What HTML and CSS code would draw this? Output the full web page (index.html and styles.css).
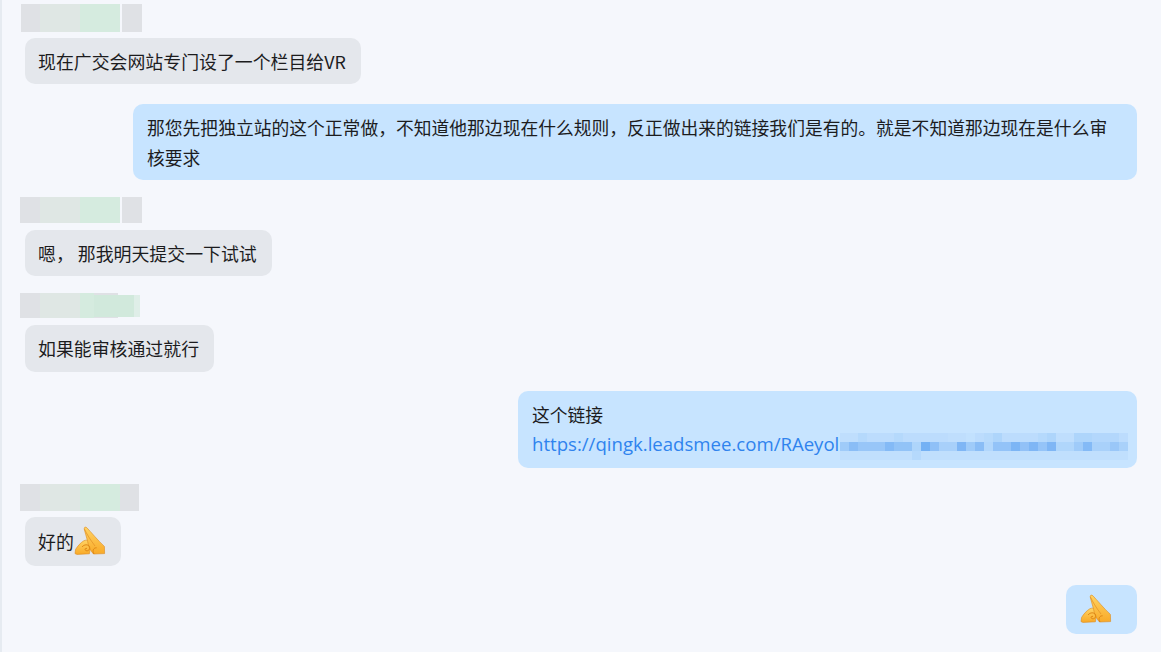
FILE: index.html
```html
<!DOCTYPE html>
<html lang="zh-CN">
<head>
<meta charset="utf-8">
<title>聊天记录</title>
<link rel="stylesheet" href="styles.css">
</head>
<body>
<svg class="defs" width="0" height="0" aria-hidden="true">
  <defs>
    <linearGradient id="gold" x1="0" y1="0" x2="0" y2="1">
      <stop offset="0" stop-color="#ffd363"/>
      <stop offset="1" stop-color="#f9aa28"/>
    </linearGradient>
    <symbol id="hands" viewBox="0 0 32 30">
      <path d="M1 27.6 L1.6 23.4 C3.5 20.2 6.5 16.8 9.8 14.8 C11.6 13.8 13.6 14 15 15.2 L17 19 L15.4 27.8 L3 28.4 Z" fill="url(#gold)" stroke="#dc8a1c" stroke-width=".6"/>
      <path d="M10.3 3.2 C9.6 1.4 11.6 .4 12.8 1.7 C17 6 24 14.6 30.4 20.4 L30.6 27.6 L19.5 28 C16.5 25 14.6 20.5 13.6 15.5 C12.6 11 11 6.5 10.3 3.2 Z" fill="url(#gold)" stroke="#dc8a1c" stroke-width=".6"/>
      <path d="M10.4 3 C12.8 8 16 13.5 21 20" fill="none" stroke="#e5932a" stroke-width=".8"/>
      <path d="M8 21 C10 18.4 14 18 15.4 20.6 C16.6 23.2 14 25.8 11.6 24.4 C10.4 23.4 11.4 21.8 13 22.4" fill="none" stroke="#d97f10" stroke-width=".9"/>
      <path d="M20 28 C18 25 19.4 21.6 22.6 21.8" fill="none" stroke="#d97f10" stroke-width=".9"/>
    </symbol>
  </defs>
</svg>
<main class="chat">
  <div class="name name-a">
    <span class="blk grey w19"></span><span class="blk pale w40"></span><span class="blk green w40"></span><span class="blk-gap"></span><span class="blk grey w20"></span>
  </div>
  <div class="bubble other">现在广交会网站专门设了一个栏目给VR</div>

  <div class="bubble mine wide">那您先把独立站的这个正常做，不知道他那边现在什么规则，反正做出来的链接我们是有的。就是不知道那边现在是什么审核要求</div>

  <div class="name name-b">
    <span class="blk grey w20"></span><span class="blk pale w40"></span><span class="blk green w40"></span><span class="blk-gap"></span><span class="blk grey w20"></span>
  </div>
  <div class="bubble other">嗯， 那我明天提交一下试试</div>

  <div class="name name-c">
    <span class="blk grey w20"></span><span class="blk pale w40"></span><span class="blk green w14"></span><span class="blk grey w24"></span>
    <span class="overlay"><span class="blk green2 w40"></span><span class="blk green3 w6"></span></span>
  </div>
  <div class="bubble other tall1">如果能审核通过就行</div>

  <div class="bubble mine link-bubble">
    <div>这个链接</div>
    <div class="link-line"><a class="link" href="#">https://qingk.leadsmee.com/RAeyol</a><span class="mosaic"><span class="row r1"></span><span class="row r2"></span><span class="row r3"></span></span></div>
  </div>

  <div class="name name-d">
    <span class="blk grey w20"></span><span class="blk pale w40"></span><span class="blk green w40"></span><span class="blk grey w19"></span>
  </div>
  <div class="bubble other emoji-bubble">好的<svg class="emoji"><use href="#hands"/></svg></div>

  <div class="bubble mine emoji-only"><svg class="emoji"><use href="#hands"/></svg></div>
</main>
</body>
</html>
```
FILE: styles.css
```css
* { box-sizing: border-box; }
html, body { margin: 0; padding: 0; height: 100%; }
body {
  background: #f5f7fc;
  border-left: 2px solid #e6ebf1;
  font-family: "Noto Sans CJK SC", "Noto Sans", sans-serif;
  font-size: 17.8px;
  line-height: 30px;
  color: #1c1c1e;
  overflow: hidden;
}
.defs { position: absolute; }
.chat {
  display: flex;
  flex-direction: column;
  align-items: flex-start;
  padding: 4px 24px 0 23px;
}
.bubble {
  padding: 8px 14px;
  border-radius: 10px;
}
.other { background: #e4e7ec; font-size: 17.9px; padding-left: 13px; padding-right: 15px; }
.mine { background: #c7e4ff; align-self: flex-end; margin-top: 20px; }
.wide { width: 1004px; }
.tall1 { padding-bottom: 9px; }

.name { display: flex; margin-bottom: 7px; margin-top: 17px; position: relative; margin-left: -5px; }
.name-a { height: 28px; margin-top: 0; margin-bottom: 6px; margin-left: -4px; }
.name-b { height: 26px; }
.name-c { height: 25px; }
.name-d { height: 27px; margin-top: 16px; margin-bottom: 6px; }
.blk { display: block; height: 100%; }
.blk-gap { width: 2px; }
.grey { background: #dfe1e5; }
.pale { background: #dfe7e4; }
.green { background: #d5ebdf; }
.green2 { background: #d1e9dc; }
.green3 { background: #dfeee8; }
.w6 { width: 6px; }
.w14 { width: 14px; }
.w19 { width: 19px; }
.w20 { width: 20px; }
.w24 { width: 24px; }
.w40 { width: 40px; }
.overlay {
  position: absolute;
  left: 74px;
  top: 2px;
  height: 22px;
  display: flex;
}

.link-bubble { width: 619px; margin-top: 19px; }
.link-line { display: flex; white-space: nowrap; }
.link {
  color: #2f83ee;
  text-decoration: none;
  font-family: "Open Sans", "Noto Sans", sans-serif;
  font-size: 18.6px;
  width: 308px;
  flex: none;
  overflow: hidden;
}
.mosaic {
  display: block;
  width: 288px;
  height: 27px;
  margin-top: 4px;
  flex: none;
}
.row { display: block; height: 9px; background-size: 288px 9px; }
.r1 {
  background: linear-gradient(90deg,
    #bfdefd 0 18px, #b5d9fc 18px 27px, #bcdcfd 27px 54px, #b5d9fc 54px 63px, #bcdcfd 63px 108px,
    #bfdefd 108px 126px, #c2e1fe 126px 135px, #bcdcfd 135px 144px, #b7dafc 144px 153px,
    #aed5fb 153px 162px, #bcdcfd 162px 198px, #b5d9fc 198px 207px, #aed5fb 207px 216px,
    #bfdefd 216px 234px, #aed5fb 234px 252px, #b3d7fc 252px 279px, #bcdcfd 279px 288px);
}
.r2 {
  background: linear-gradient(90deg,
    #9fcbf9 0 9px, #8abdf6 9px 18px, #98c6f8 18px 45px, #84baf6 45px 54px, #92c3f7 54px 72px,
    #aed5fb 72px 81px, #74b1f4 81px 90px, #8fc0f7 90px 99px, #a8d0fa 99px 117px, #7fb6f5 117px 126px,
    #9fcbf9 126px 135px, #8abdf6 135px 144px, #b2d7fc 144px 153px, #93c3f8 153px 171px,
    #7cb5f5 171px 180px, #92c1f7 180px 189px, #7fb6f5 189px 198px, #95c4f8 198px 207px,
    #7fb6f5 207px 216px, #b0d6fb 216px 234px, #9fcbf9 234px 243px, #84baf6 243px 252px,
    #a9d1fa 252px 270px, #9ac7f8 270px 279px, #a9d1fa 279px 288px);
}
.r3 {
  background: linear-gradient(90deg,
    #c0dffd 0 72px, #b5d9fc 72px 81px, #c0dffd 81px 288px);
}

.emoji-bubble { display: flex; align-items: center; margin-top: 0; padding-bottom: 9px; height: 49px; }
.emoji { width: 32px; height: 30px; flex: none; display: block; }
.emoji-only { width: 71px; height: 49px; margin-top: 19px; padding: 9px 14px 0 14px; }
```
